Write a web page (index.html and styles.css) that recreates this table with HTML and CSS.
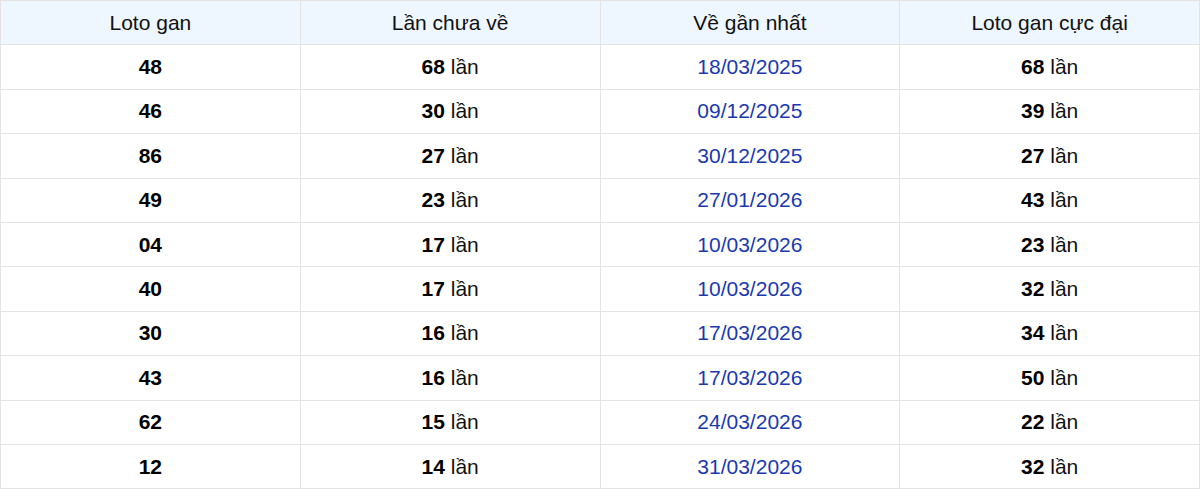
FILE: index.html
```html
<!DOCTYPE html>
<html lang="vi">
<head>
<meta charset="utf-8">
<link rel="stylesheet" href="styles.css">
</head>
<body>
<table class="gan">
  <thead>
    <tr><th>Loto gan</th><th>Lần chưa về</th><th>Về gần nhất</th><th>Loto gan cực đại</th></tr>
  </thead>
  <tbody>
    <tr><td><b>48</b></td><td><b>68</b> lần</td><td class="date">18/03/2025</td><td><b>68</b> lần</td></tr>
    <tr><td><b>46</b></td><td><b>30</b> lần</td><td class="date">09/12/2025</td><td><b>39</b> lần</td></tr>
    <tr><td><b>86</b></td><td><b>27</b> lần</td><td class="date">30/12/2025</td><td><b>27</b> lần</td></tr>
    <tr><td><b>49</b></td><td><b>23</b> lần</td><td class="date">27/01/2026</td><td><b>43</b> lần</td></tr>
    <tr><td><b>04</b></td><td><b>17</b> lần</td><td class="date">10/03/2026</td><td><b>23</b> lần</td></tr>
    <tr><td><b>40</b></td><td><b>17</b> lần</td><td class="date">10/03/2026</td><td><b>32</b> lần</td></tr>
    <tr><td><b>30</b></td><td><b>16</b> lần</td><td class="date">17/03/2026</td><td><b>34</b> lần</td></tr>
    <tr><td><b>43</b></td><td><b>16</b> lần</td><td class="date">17/03/2026</td><td><b>50</b> lần</td></tr>
    <tr><td><b>62</b></td><td><b>15</b> lần</td><td class="date">24/03/2026</td><td><b>22</b> lần</td></tr>
    <tr><td><b>12</b></td><td><b>14</b> lần</td><td class="date">31/03/2026</td><td><b>32</b> lần</td></tr>
  </tbody>
</table>
</body>
</html>
```
FILE: styles.css
```css
html, body {
  margin: 0;
  padding: 0;
  background: #fff;
}
.gan {
  width: 1200px;
  border-collapse: collapse;
  table-layout: fixed;
  font-family: "Liberation Sans", Arial, sans-serif;
  font-size: 21px;
  color: #111;
}
.gan th, .gan td {
  border: 1px solid #e3e3e6;
  text-align: center;
  vertical-align: middle;
  padding: 0;
  height: 44.4px;
  box-sizing: border-box;
}
.gan th {
  font-weight: normal;
  background: #eef6ff;
  color: #111;
}
.gan td b {
  font-weight: bold;
  color: #000;
}
.gan td.date {
  color: #1a39b0;
}
```
